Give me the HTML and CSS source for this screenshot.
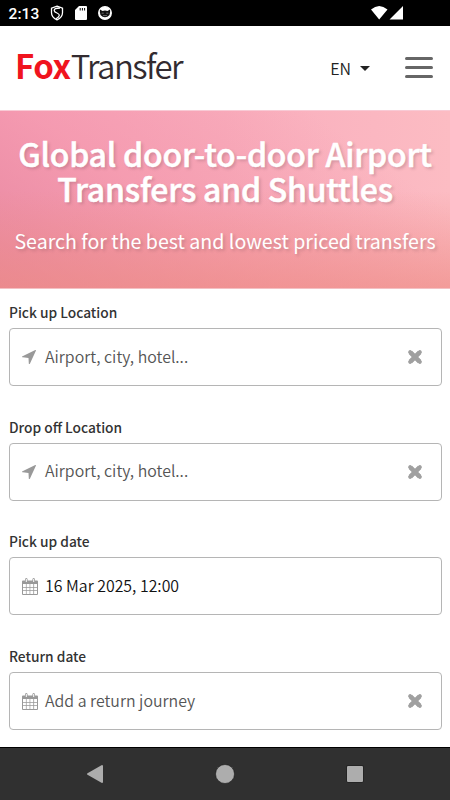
FILE: index.html
```html
<!DOCTYPE html>
<html lang="en">
<head>
<meta charset="utf-8">
<meta name="viewport" content="width=device-width, initial-scale=1">
<title>FoxTransfer</title>
<link rel="stylesheet" href="styles.css">
</head>
<body>
<svg class="defs" width="0" height="0">
  <symbol id="arrow" viewBox="0 0 14 14"><path d="M14 .6 8 13.500q-.3.500-.7.500-.5 0-.5-.6L6.500 8 .7 7.300Q0 7.200 0 6.700q0-.3.500-.5L13.300 0q.7-.1.700.6z"/></symbol>
  <symbol id="cross" viewBox="0 0 16 16"><path d="M3.400 3.400 12.600 12.600M12.600 3.400 3.400 12.600" fill="none" stroke="currentColor" stroke-width="4.600"/><path d="M3 3 13 13M13 3 3 13" fill="none" stroke="currentColor" stroke-width="3.600" stroke-linecap="round"/><path d="M2.500 2.500 13.500 13.500M13.500 2.500 2.500 13.500" fill="none" stroke="currentColor" stroke-width="3.600"/></symbol>
  <symbol id="calendar" viewBox="0 0 16 17"><path fill-rule="evenodd" d="M1 2.500h2V1.600Q3 0 4.300 0t1.300 1.600v.9h4.800v-.9Q10.400 0 11.700 0T13 1.600v.9h2q1 0 1 1V16q0 1-1 1H1q-1 0-1-1V3.500q0-1 1-1zM1 6V9h2.900V6zm3.600 0V9h3V6zm3.700 0V9h3V6zm3.800 0V9H15V6zM1 9.800v2.500h2.900V9.800zm3.600 0v2.500h3V9.800zm3.700 0v2.500h3V9.800zm3.800 0v2.500H15V9.800zM1 13v3h2.900v-3zm3.600 0v3h3v-3zm3.700 0v3h3v-3zm3.800 0v3H15v-3z"/><path d="M4.300 1v3M11.700 1v3" stroke="#fff" stroke-width="1"/></symbol>
</svg>

<div class="status">
  <span class="clock">2:13</span>
  <svg class="shield" width="14" height="16" viewBox="0 0 14 16"><path d="M7 1.200 12.500 3.200v4.500q0 4.600-5.500 7.100Q1.500 12.300 1.500 7.700V3.200z" fill="none" stroke="#fff" stroke-width="1.300"/><path d="M10 3Q4 3 4.200 5.600 4.500 7.200 7 8q2.500 1 2.300 2.500-.3 1.600-3.300 3.300" fill="none" stroke="#fff" stroke-width="1.300"/></svg>
  <svg class="sd" width="12" height="14" viewBox="0 0 12 14"><path fill="#fff" d="M4 0h7q1 0 1 1v12q0 1-1 1H1q-1 0-1-1V4z"/><path d="M5.200 2v2.500M7.400 2v2.500M9.600 2v2.500" stroke="#000" stroke-width="1"/></svg>
  <svg class="face" width="14" height="14" viewBox="0 0 14 14"><circle cx="7" cy="7" r="6.300" fill="#fff" stroke="#fff" stroke-width="1.300"/><path d="M2 3.500 4.500 5Q7 4 9.500 5L12 3.500q.6 3-.5 5.500Q9.500 11.200 7 11.200T2.500 9Q1.400 6.500 2 3.500z" fill="#111"/><path d="M3.700 7.200h2M8.300 7.200h2M5 9.600h4" stroke="#888" stroke-width=".8"/></svg>
  <svg class="signal" width="34" height="16" viewBox="0 0 34 16"><path fill="#fff" d="M1 4.500Q9.200-2.500 17.500 4.500L9.200 14.500zM33 1v13.500H19.500z"/></svg>
</div>

<header class="header">
  <div class="logo"><span class="fox">Fox</span><span class="transfer">Transfer</span></div>
  <div class="lang">EN<span class="caret"></span></div>
  <div class="menu"><i></i><i></i><i></i></div>
</header>

<section class="hero">
  <h1>Global door-to-door Airport<br>Transfers and Shuttles</h1>
  <p>Search for the best and lowest priced transfers</p>
</section>

<main class="form">
  <div class="group">
    <label>Pick up Location</label>
    <div class="field"><svg class="arrow"><use href="#arrow"/></svg><span>Airport, city, hotel...</span><svg class="cross"><use href="#cross"/></svg></div>
  </div>
  <div class="group">
    <label>Drop off Location</label>
    <div class="field"><svg class="arrow"><use href="#arrow"/></svg><span>Airport, city, hotel...</span><svg class="cross"><use href="#cross"/></svg></div>
  </div>
  <div class="group">
    <label>Pick up date</label>
    <div class="field filled"><svg class="calendar"><use href="#calendar"/></svg><span>16 Mar 2025, 12:00</span></div>
  </div>
  <div class="group">
    <label>Return date</label>
    <div class="field"><svg class="calendar"><use href="#calendar"/></svg><span>Add a return journey</span><svg class="cross"><use href="#cross"/></svg></div>
  </div>
</main>

<nav class="navbar">
  <svg width="18" height="20" viewBox="0 0 18 20"><path d="M2 10 16 2v16z" fill="#adadad" stroke="#adadad" stroke-width="2" stroke-linejoin="round"/></svg>
  <svg width="20" height="20" viewBox="0 0 20 20"><circle cx="10" cy="10" r="9.500" fill="#adadad" stroke="#181818" stroke-width=".6"/></svg>
  <svg width="18" height="18" viewBox="0 0 18 18"><rect x=".5" y=".5" width="17" height="17" rx="1.500" fill="#adadad" stroke="#111" stroke-width=".8"/></svg>
</nav>
</body>
</html>
```
FILE: styles.css
```css
* { box-sizing: border-box; }
body {
  margin: 0;
  width: 450px;
  height: 800px;
  overflow: hidden;
  display: flex;
  flex-direction: column;
  background: #fff;
  font-family: "Noto Sans CJK SC", "Noto Sans", sans-serif;
}
.defs { display: block; flex: none; height: 0; }
.status {
  flex: none;
  height: 26px;
  background: #000;
  color: #fff;
  display: flex;
  align-items: center;
  padding: 0 46px 0 8px;
}
.clock { width: 42px; font: 500 15.500px/26px Roboto, sans-serif; letter-spacing: .1px; padding: 1px 0 0 .5px; }
.sd { margin-left: 11px; }
.face { margin-left: 11px; }
.signal { margin-left: auto; }
.header {
  flex: none;
  height: 84px;
  display: flex;
  align-items: center;
  padding: 0 17px 0 15px;
}
.logo { height: 84px; font-size: 33px; line-height: 79px; white-space: nowrap; }
.fox { color: #f0141e; font-weight: 700; letter-spacing: -.4px; }
.transfer { color: #322b30; font-weight: 350; letter-spacing: -1.600px; }
.lang { margin-left: auto; display: flex; align-items: center; font-size: 16px; line-height: 20px; color: #222; font-weight: 350; }
.caret { margin-left: 9px; border: 5px solid transparent; border-top-color: #222; border-bottom: 0; }
.menu { width: 28px; margin: -1px 0 0 35px; display: flex; flex-direction: column; gap: 6px; }
.menu i { height: 3px; border-radius: 2px; background: #666; }
.hero {
  flex: none;
  height: 179px;
  padding-top: 25px;
  text-align: center;
  color: #fff;
  white-space: nowrap;
  border-top: 1px solid #f8cad5;
  border-bottom: 1px solid #f4c0c3;
  background:
    linear-gradient(to bottom, rgba(240, 140, 130, 0) 45%, rgba(238, 140, 130, .6) 100%),
    linear-gradient(35deg, rgba(225, 125, 148, .75) 0%, rgba(240, 140, 160, .45) 40%, rgba(250, 165, 190, 0) 80%),
    linear-gradient(90deg, #f9a5bf 0%, #f9adbd 50%, #fcbcc3 100%);
}
.hero h1 { margin: 0; font-size: 32px; line-height: 35px; font-weight: 500; letter-spacing: -.23px; -webkit-text-stroke: .5px #fff; text-shadow: 2px 2px 3px rgba(90, 60, 70, .24); }
.hero p { margin: 20px 0 0; font-size: 19.600px; line-height: 30px; text-shadow: 2px 2px 3px rgba(90, 60, 70, .24); }
.form { flex: 1; min-height: 0; padding: 12px 8px 0 9px; }
.group { height: 114.700px; }
.group label { display: block; height: 27px; font-size: 13.750px; line-height: 22px; font-weight: 500; color: #333; }
.field {
  height: 58px;
  border: 1px solid #b5b5b5;
  border-radius: 4px;
  display: flex;
  align-items: center;
  padding: 0 18px 0 12px;
  font-size: 15.900px;
  font-weight: 350;
  color: #555;
  white-space: nowrap;
}
.field span { line-height: 24px; margin-top: -1px; }
.filled { color: #111; }
.field svg { flex: none; fill: #999; color: #a0a0a0; }
.arrow { width: 14px; height: 14px; margin-right: 9px; }
.calendar { width: 16px; height: 17px; margin-right: 7px; }
.cross { width: 16px; height: 16px; margin-left: auto; }
.navbar {
  flex: none;
  height: 53px;
  background: #303030;
  border-top: 1px solid #000;
  display: flex;
  align-items: center;
  justify-content: space-between;
  padding: 0 86px;
}
```
